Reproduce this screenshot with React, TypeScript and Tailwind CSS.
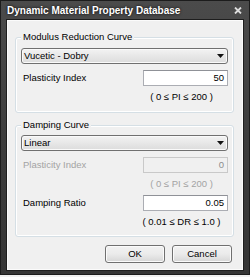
const font = { fontFamily: '"Liberation Sans", Arial, sans-serif' };

function Dropdown({ label }: { label: string }) {
  return (
    <div className="flex h-[16px] items-center justify-between rounded-[3px] border border-[#707070] bg-gradient-to-b from-[#f3f3f3] to-[#dcdcdc] pl-[2px] pr-[3px] shadow-[inset_0_0_0_1px_#fafafa]">
      <span className="text-[9.5px] leading-none text-black">{label}</span>
      <svg width="7" height="4" viewBox="0 0 7 4">
        <path d="M0 0h7L3.5 4z" fill="#111" />
      </svg>
    </div>
  );
}

function Field({
  label,
  value,
  range,
  disabled,
}: {
  label: string;
  value: string;
  range: string;
  disabled?: boolean;
}) {
  return (
    <div className="flex flex-col">
      <div className="flex items-center justify-between">
        <span className={`pl-[2px] text-[9.5px] ${disabled ? "text-[#a3a3a3]" : "text-black"}`}>
          {label}
        </span>
        <div
          className={`flex h-[16px] w-[85px] items-center justify-end border pr-[3px] text-[9.5px] ${
            disabled
              ? "border-[#c9c9c9] bg-[#f0f0f0] text-[#8c8c8c]"
              : "border-[#abadb3] border-t-[#8f9197] bg-white text-black"
          }`}
        >
          {value}
        </div>
      </div>
      <div
        className={`mt-[5px] flex w-[85px] justify-center self-end whitespace-nowrap pr-[8px] text-[9.5px] leading-[12px] ${
          disabled ? "text-[#a3a3a3]" : "text-black"
        }`}
      >
        {range}
      </div>
    </div>
  );
}

function Group({
  title,
  className,
  children,
}: {
  title: string;
  className: string;
  children: React.ReactNode;
}) {
  return (
    <div
      className={`relative rounded-[3px] border border-[#d5dfe5] px-[5px] shadow-[inset_0_0_0_1px_#ffffff] ${className}`}
    >
      <span className="absolute left-[5px] top-[-7px] bg-[#f0f0f0] px-[2px] text-[9.5px] leading-[12px] text-black">
        {title}
      </span>
      {children}
    </div>
  );
}

function Button({ label }: { label: string }) {
  return (
    <div className="flex h-[18px] w-[60px] items-center justify-center rounded-[3px] border border-[#707070] bg-gradient-to-b from-[#f2f2f2] via-[#ebebeb] to-[#d6d6d6] text-[9.5px] text-black shadow-[inset_0_0_0_1px_#fbfbfb]">
      {label}
    </div>
  );
}

export default function App() {
  return (
    <div style={font} className="flex h-[277px] w-[250px] flex-col bg-[#f0f0f0]">
      <div className="flex h-[275px] flex-col bg-gradient-to-b from-[#4b4b4b] via-[#3c3c3c] to-[#353535] shadow-[inset_0_0_0_1px_#1c1c1c]">
        <div className="flex h-[20px] shrink-0 items-center justify-between pl-[7px] pr-[8px]">
          <span className="text-[10px] font-bold text-white [text-shadow:0_0_3px_#000]">
            Dynamic Material Property Database
          </span>
          <svg width="8" height="7" viewBox="0 0 8 7">
            <path d="M1 0.5l6 6M7 0.5l-6 6" stroke="#dcdcdc" strokeWidth="1.8" />
          </svg>
        </div>
        <div className="mx-[7px] flex h-[250px] flex-col bg-[#f0f0f0] pl-[8px] pr-[9px] pt-[17px] shadow-[0_0_0_1px_#1e1e1e,inset_0_0_0_1px_#fbfbfb]">
          <Group title="Modulus Reduction Curve" className="pb-[9px] pt-[10px]">
            <Dropdown label="Vucetic - Dobry" />
            <div className="mt-[6px]">
              <Field label="Plasticity Index" value="50" range="( 0 ≤ PI ≤ 200 )" />
            </div>
          </Group>
          <Group title="Damping Curve" className="mt-[12px] pb-[8px] pt-[9px]">
            <Dropdown label="Linear" />
            <div className="mt-[6px] flex flex-col gap-[5px]">
              <Field label="Plasticity Index" value="0" range="( 0 ≤ PI ≤ 200 )" disabled />
              <Field label="Damping Ratio" value="0.05" range="( 0.01 ≤ DR ≤ 1.0 )" />
            </div>
          </Group>
          <div className="mt-[8px] flex justify-end gap-[7px] pr-[2px]">
            <Button label="OK" />
            <Button label="Cancel" />
          </div>
        </div>
      </div>
    </div>
  );
}
